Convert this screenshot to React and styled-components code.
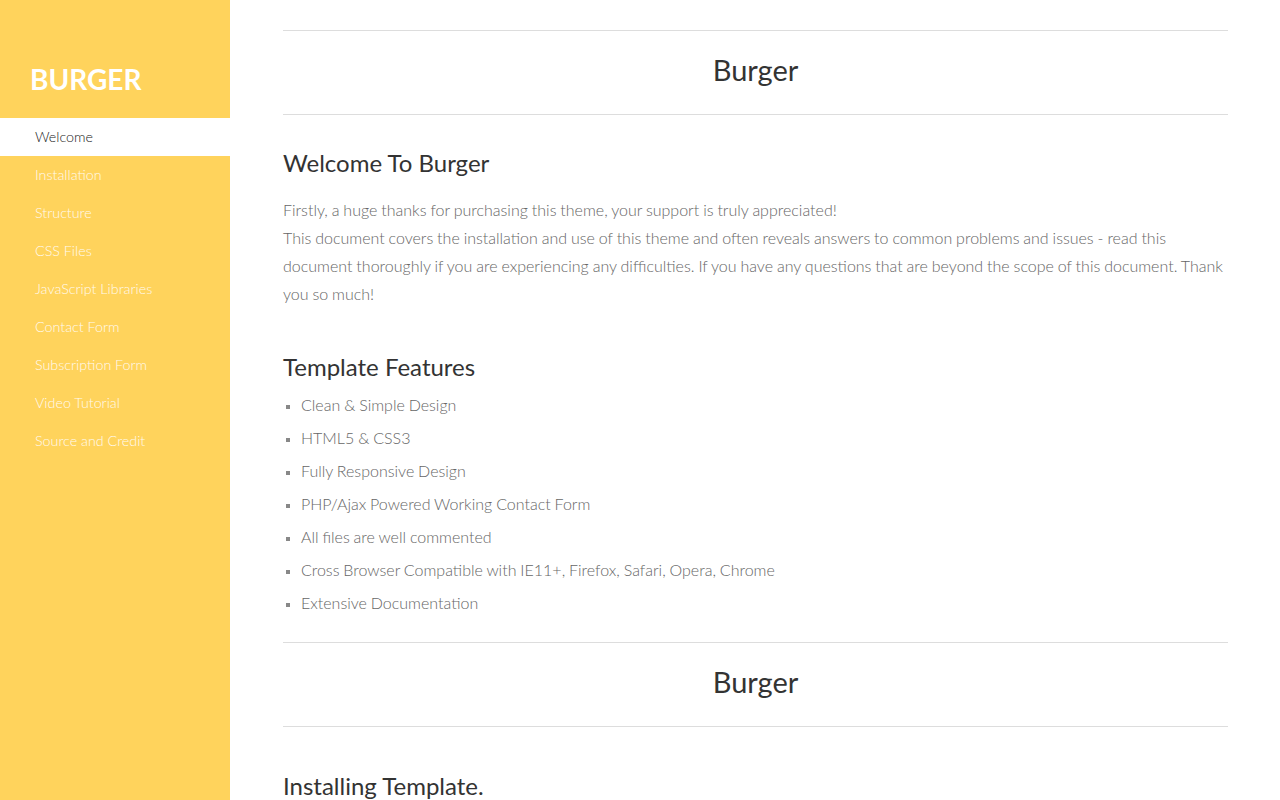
import React from "react";
import styled, { createGlobalStyle } from "styled-components";

const Global = createGlobalStyle`
  html, body { margin: 0; padding: 0; background: #fff; }
  body { font-family: Lato, "Open Sans", "Liberation Sans", sans-serif; }
  * { box-sizing: border-box; }
`;

const Layout = styled.div`
  display: flex;
  min-height: 100vh;
`;

const Sidebar = styled.aside`
  width: 230px;
  flex: 0 0 230px;
  background: #ffd35c;
  height: 100vh;
  position: sticky;
  top: 0;
  display: flex;
  flex-direction: column;
`;

const Logo = styled.div`
  height: 118px;
  padding: 40px 30px 0;
  display: flex;
  align-items: center;
  font-size: 28px;
  font-weight: 700;
  color: #fff;
`;

const Nav = styled.nav`
  display: flex;
  flex-direction: column;
`;

const NavItem = styled.a`
  display: flex;
  align-items: center;
  height: 38px;
  padding-left: 35px;
  padding-bottom: 1px;
  font-size: 14.3px;
  font-weight: 300;
  text-decoration: none;
  color: ${(p) => (p.$active ? "#222" : "#fffaf0")};
  background: ${(p) => (p.$active ? "#fff" : "transparent")};
  cursor: pointer;
`;

const Main = styled.main`
  flex: 1;
  padding: 30px 52px 0 53px;
  min-width: 0;
`;

const Banner = styled.div`
  border-top: 1px solid #ddd;
  border-bottom: 1px solid #ddd;
  height: 85px;
  display: flex;
  align-items: center;
  justify-content: center;
`;

const BannerTitle = styled.h1`
  margin: 0;
  font-size: 29px;
  font-weight: 400;
  color: #333;
  line-height: 1;
  padding-bottom: 7px;
`;

const SectionTitle = styled.h2`
  margin: ${(p) => p.$top}px 0 0;
  font-size: 24px;
  font-weight: 400;
  line-height: 30px;
  color: #333;
`;

const Para = styled.p`
  margin: 18px 0 0;
  font-size: 16px;
  font-weight: 300;
  line-height: 28px;
  word-spacing: -0.45px;
  color: #666;
`;

const Features = styled.ul`
  margin: 9px 0 25px;
  padding-left: 18px;
  list-style: square;
`;

const Feature = styled.li`
  font-size: 16px;
  font-weight: 300;
  line-height: 28px;
  word-spacing: -0.45px;
  color: #666;
  margin-bottom: 5px;
  &::marker { color: #888; font-size: 12px; }
`;

const navItems = [
  "Welcome",
  "Installation",
  "Structure",
  "CSS Files",
  "JavaScript Libraries",
  "Contact Form",
  "Subscription Form",
  "Video Tutorial",
  "Source and Credit",
];

const features = [
  "Clean & Simple Design",
  "HTML5 & CSS3",
  "Fully Responsive Design",
  "PHP/Ajax Powered Working Contact Form",
  "All files are well commented",
  "Cross Browser Compatible with IE11+, Firefox, Safari, Opera, Chrome",
  "Extensive Documentation",
];

export default function App() {
  return (
    <>
      <Global />
      <Layout>
        <Sidebar>
          <Logo>BURGER</Logo>
          <Nav>
            {navItems.map((n, i) => (
              <NavItem key={n} $active={i === 0}>
                {n}
              </NavItem>
            ))}
          </Nav>
        </Sidebar>
        <Main>
          <Banner>
            <BannerTitle>Burger</BannerTitle>
          </Banner>
          <SectionTitle $top={33}>Welcome To Burger</SectionTitle>
          <Para>
            Firstly, a huge thanks for purchasing this theme, your support is truly appreciated!
            <br />
            This document covers the installation and use of this theme and often reveals answers to common problems and issues - read this document thoroughly if you are experiencing any difficulties. If you have any questions that are beyond the scope of this document. Thank you so much!
          </Para>
          <SectionTitle $top={44}>Template Features</SectionTitle>
          <Features>
            {features.map((f) => (
              <Feature key={f}>{f}</Feature>
            ))}
          </Features>
          <Banner>
            <BannerTitle>Burger</BannerTitle>
          </Banner>
          <SectionTitle $top={44}>Installing Template.</SectionTitle>
          <Para>
            Unzip the downloaded package and upload the template files to your server.
          </Para>
        </Main>
      </Layout>
    </>
  );
}
